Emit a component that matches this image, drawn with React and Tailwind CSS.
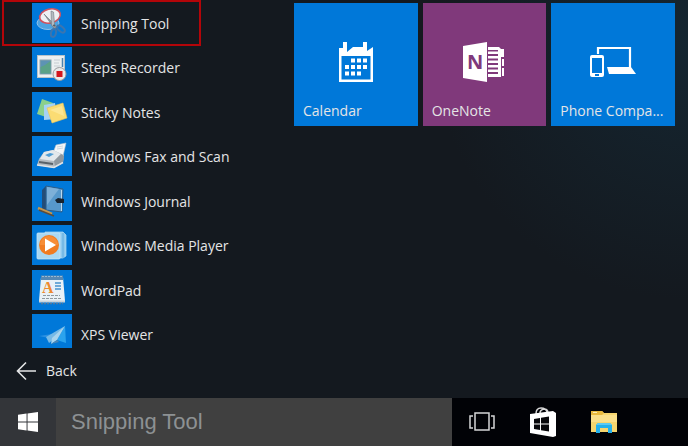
import { useState } from "react";

function SnippingIcon() {
    return (
        <svg viewBox="0 0 40 40" className="h-10 w-10" aria-hidden="true">
            <ellipse cx="16" cy="20" rx="11" ry="6.500" fill="#4da3e0" stroke="#8fc2ea" />
            <ellipse cx="18" cy="13" rx="10.500" ry="7" fill="#eef0f3" stroke="#d0525f" strokeWidth="1.600" transform="rotate(-14 18 13)" />
            <path d="M12 11 L26 25 L22 25 Z" fill="#8d969e" stroke="#6f7780" strokeWidth="0.600" />
            <path d="M19 8 L21.500 9 L23 26 L19.500 22 Z" fill="#b5bbc1" stroke="#6f7780" strokeWidth="0.600" />
            <ellipse cx="21.500" cy="30" rx="2.500" ry="4" fill="none" stroke="#3a75b0" strokeWidth="2" transform="rotate(14 21.500 30)" />
            <ellipse cx="29" cy="26" rx="2.500" ry="4.500" fill="none" stroke="#3a75b0" strokeWidth="2" transform="rotate(-48 29 26)" />
            <circle cx="22" cy="22.500" r="1" fill="#4e5963" />
        </svg>
    );
}

function StepsIcon() {
    return (
        <svg viewBox="0 0 40 40" className="h-10 w-10" aria-hidden="true">
            <rect x="5.500" y="8.500" width="27" height="22" fill="#eceff0" stroke="#b9c3c9" />
            <rect x="8" y="13" width="11" height="14" fill="#5d93b4" stroke="#8ba3ad" />
            <path d="M8.500 20 L13 18 L18.500 14 V26.500 H8.500 Z" fill="#5ba287" />
            <path d="M22 13 H28 M22 16 H27 M22 19 H28" stroke="#c5ccd1" />
            <path d="M30.500 11 V20" stroke="#4f83ad" strokeWidth="1.500" />
            <circle cx="27.500" cy="27" r="6.500" fill="#e9e9e9" stroke="#9b9da0" />
            <rect x="24.500" y="24" width="6" height="6" fill="#d3161d" />
        </svg>
    );
}

function StickyIcon() {
    return (
        <svg viewBox="0 0 40 40" className="h-10 w-10" aria-hidden="true">
            <path d="M10 7 L21 11 L17 26 L5 22 Z" fill="#8bd08c" />
            <path d="M12 13 L23 11 L25 27 L12 28 Z" fill="#a5d2f5" />
            <path d="M15 16 L31 11 L35 26 L20 31 Z" fill="#fbdc73" stroke="#e6c55d" strokeWidth="0.6" />
            <path d="M18 18 L30 14 L32 24 Z" fill="#fde693" />
        </svg>
    );
}

function FaxIcon() {
    return (
        <svg viewBox="0 0 40 40" className="h-10 w-10" aria-hidden="true">
            <path d="M24 9 L34 7 L31 20 L21 17 Z" fill="#f3f6f8" stroke="#b8c5cf" strokeWidth="0.6" />
            <path d="M25 11 L31 10 M25 13 L31 12" stroke="#c2ccd4" strokeWidth="0.8" />
            <path d="M12 16 L21 14 L32 19 L31 27 L22 32 L5 29 L7 23 Z" fill="#b4bbc1" />
            <path d="M12 16 L21 14 L29 18 L22 25 L8 23 Z" fill="#e3e8ec" />
            <path d="M13 19 L18 17 L22 18 L17 21 Z" fill="#4f9dd5" />
            <path d="M22 25 L29 18 L32 20 L31 26 L23 30 Z" fill="#8f989f" />
            <path d="M7 26 L21 28" stroke="#59626a" strokeWidth="2" fill="none" />
            <path d="M5 29 L22 31.500 L31 26.500" stroke="#dfe3e6" strokeWidth="1.500" fill="none" />
        </svg>
    );
}

function JournalIcon() {
    return (
        <svg viewBox="0 0 40 40" className="h-10 w-10" aria-hidden="true">
            <path d="M10 9 L14 5 V29 L10 31 Z" fill="#234d78" />
            <path d="M14 5 L31 8 L30 31 L14 29 Z" fill="#5798cb" stroke="#2c5c88" />
            <path d="M15 6 L27 8 L15 24 Z" fill="#7eb0d8" />
            <path d="M29.500 9 V30" stroke="#b7d8ee" />
            <path d="M23 19 L26 17 L32 18 V22 L25 22 Z" fill="#18232f" />
            <path d="M6 27 L20 33" stroke="#c6964c" strokeWidth="2.500" />
            <path d="M7 29 L22 35" stroke="#5b4d3d" strokeWidth="1.500" />
        </svg>
    );
}

function MediaIcon() {
    return (
        <svg viewBox="0 0 40 40" className="h-10 w-10" aria-hidden="true">
            <path d="M13 7 H31 L34 10 V31 L31 33 H13 Z" fill="#8ec9ee" stroke="#b3dcf4" strokeWidth="0.7" />
            <path d="M31 8 V33" stroke="#5faade" />
            <rect x="5" y="8" width="23" height="26" rx="1" fill="#a9d8f3" stroke="#c5e6f8" strokeWidth="0.8" />
            <circle cx="17" cy="20" r="10" fill="#f07c22" />
            <path d="M8 20 A9 9 0 0 1 26 20 Z" fill="#f78d36" />
            <path d="M13 13.500 L24 20 L13 26.500 Z" fill="#fff" />
        </svg>
    );
}

function WordPadIcon() {
    return (
        <svg viewBox="0 0 40 40" className="h-10 w-10" aria-hidden="true">
            <path d="M9 7 H31 L33 31 H7 Z" fill="#e9f1f7" />
            <path d="M9 5.500 H31 V10 H9 Z" fill="#5688b4" />
            <path d="M10 6.500 H31" stroke="#9eb9ce" strokeDasharray="2 1" />
            <text x="10" y="23" fontFamily="Liberation Serif, serif" fontSize="16" fontWeight="bold" fill="#ee8b2f">A</text>
            <path d="M23 13 H29 M23 16 H29 M23 19 H29" stroke="#70aad8" strokeWidth="2" />
            <path d="M11 25.500 H28 M10 28.500 H29" stroke="#8f999f" strokeDasharray="3 1" />
            <path d="M7 31.500 H33" stroke="#c9d3da" strokeWidth="2" />
            <path d="M9 33.500 H31" stroke="#55789a" strokeWidth="1.500" strokeDasharray="2 1" />
        </svg>
    );
}

function XpsIcon() {
    return (
        <svg viewBox="0 0 40 34" className="h-[34px] w-10" aria-hidden="true">
            <path d="M7 22 L20 20 L17 24 Z" fill="#2b90e2" />
            <path d="M14 23 L33 12 L22 25 L17 29 Z" fill="#76b9e6" />
            <path d="M33 12 L34 29 L25 26 Z" fill="#2ba3ee" />
            <path d="M33 12 L25 26 L19 30 L20 24 Z" fill="#a9d4ee" />
            <path d="M19 30 L25 26 L27 28 Z" fill="#4d86b5" />
        </svg>
    );
}

function CalendarIcon() {
    return (
        <svg viewBox="0 0 34 40" className="h-10 w-[34px]" fill="#fff" aria-hidden="true">
            <path d="M0 6 H4 V0 H8 V10 L14 5 H24 V0 H28 V9 L34 5 V40 H0 Z M2.500 14 V37.500 H31.500 V14 Z" fillRule="evenodd" />
            <path d="M12 16.500h4v4h-4z M18 16.500h4v4h-4z M24 16.500h4v4h-4z M6 23h4v4h-4z M12 23h4v4h-4z M18 23h4v4h-4z M24 23h4v4h-4z M6 29.500h4v4h-4z M12 29.500h4v4h-4z M18 29.500h4v4h-4z" />
        </svg>
    );
}

function OneNoteIcon() {
    return (
        <svg viewBox="0 0 42 40" className="h-10 w-[42px]" aria-hidden="true">
            <path d="M0 4 L24 0 V40 L0 36 Z" fill="#fff" />
            <text x="4" y="27" fontFamily="Open Sans, sans-serif" fontSize="20" fontWeight="bold" fill="#80397b">N</text>
            <path d="M25 5 H36 L38 7 V35 H25 V32 H35 V30 H25 V27.500 H35 V25.500 H25 V23 H35 V21 H25 V18.500 H35 V16.500 H25 V14 H35 V12 H25 V9.500 H35 V8 H25 Z" fill="#fff" />
            <path d="M38 7 H41 V15 H38 Z M39 17 H41 V24 H39 Z M39 26 H41 V34 H39 Z" fill="#fff" />
        </svg>
    );
}

function PhoneIcon() {
    return (
        <svg viewBox="0 0 48 32" className="h-8 w-12" aria-hidden="true">
            <path d="M9 8 V2 H41 V21" fill="none" stroke="#fff" strokeWidth="2.200" />
            <path d="M18 21 H42 L47 28 H20 Z" fill="#fff" />
            <path d="M3 9 H13 Q15 9 15 11 V29 Q15 31 13 31 H3 Q1 31 1 29 V11 Q1 9 3 9 Z M3 12 V27 H13 V12 Z M6 28 V30 H10 V28 Z" fillRule="evenodd" fill="#fff" />
        </svg>
    );
}

const apps = [
    { name: "Snipping Tool", Icon: SnippingIcon, marked: true },
    { name: "Steps Recorder", Icon: StepsIcon },
    { name: "Sticky Notes", Icon: StickyIcon },
    { name: "Windows Fax and Scan", Icon: FaxIcon },
    { name: "Windows Journal", Icon: JournalIcon },
    { name: "Windows Media Player", Icon: MediaIcon },
    { name: "WordPad", Icon: WordPadIcon },
    { name: "XPS Viewer", Icon: XpsIcon },
];

const tiles = [
    { name: "Calendar", Icon: CalendarIcon, color: "bg-[#0078d9]" },
    { name: "OneNote", Icon: OneNoteIcon, color: "bg-[#80397b]" },
    { name: "Phone Compa...", Icon: PhoneIcon, color: "bg-[#0078d9]" },
];

function AppRow({ name, Icon, marked }) {
    return (
        <li className="relative h-10">
            <button type="button" className="flex h-10 w-full items-start pl-8 text-left">
                <span className="bg-[#0078d9]">
                    <Icon />
                </span>
                <span className="pt-px pl-[9px] leading-10">{name}</span>
            </button>
            {marked && (
                <span className="pointer-events-none absolute -inset-y-[3px] left-0.5 w-[199px] border-2 border-[#b30509]"></span>
            )}
        </li>
    );
}

function Tile({ name, Icon, color }) {
    return (
        <button type="button" className={`${color} flex h-[123px] flex-col text-left`}>
            <span className="flex w-full flex-1 items-end justify-center pb-1">
                <span className="flex h-10 items-center">
                    <Icon />
                </span>
            </span>
            <span className="w-full truncate px-[9px] pt-[13px] pb-[3px] leading-6">{name}</span>
        </button>
    );
}

function Taskbar() {
    const [query, setQuery] = useState("Snipping Tool");

    return (
        <footer className="flex h-12 bg-[#010206]">
            <button type="button" aria-label="Start" className="flex w-14 items-center justify-center bg-[#333539]">
                <svg viewBox="0 0 21 21" className="h-5 w-5" fill="#fff" aria-hidden="true">
                    <path d="M0 3 L9 1.700 V10 H0 Z M10 1.500 L21 0 V10 H10 Z M0 11 H9 V19.300 L0 18 Z M10 11 H21 V21 L10 19.500 Z" />
                </svg>
            </button>
            <input
                type="text"
                aria-label="Search"
                value={query}
                onChange={(e) => setQuery(e.target.value)}
                className="min-w-0 flex-1 bg-[#404040] px-[15px] font-['Liberation_Sans',sans-serif] text-[22px] text-[#8d9193] outline-none"
            />
            <div className="flex w-[236px] items-center gap-[33px] pl-4">
                <button type="button" aria-label="Task View">
                    <svg viewBox="0 0 28 20" className="h-5 w-7" fill="none" stroke="#d5d6d7" strokeWidth="1.500" aria-hidden="true">
                        <path d="M7 1 H21 V18 H7 Z M5 4 H2 V16 H5 M23 4 H26 V16 H23" />
                    </svg>
                </button>
                <button type="button" aria-label="Store">
                    <svg viewBox="0 0 28 32" className="h-8 w-7" aria-hidden="true">
                        <path d="M7 8 Q7 2 12 2 Q17 2 18 6 M11 7 Q11 4 15 3 Q19 3 19 7" fill="none" stroke="#d8d8d8" strokeWidth="1.500" />
                        <path d="M1 8 L24 5 L27 7 V30 L24 31 L1 27 Z" fill="#fff" />
                        <path d="M5 13 L11 12 V17.500 H5 Z M12 11.800 L20 10.500 V17.500 H12 Z M5 18.500 H11 V24 L5 23 Z M12 18.500 H20 V25.500 L12 24.300 Z" fill="#08080b" />
                    </svg>
                </button>
                <button type="button" aria-label="File Explorer">
                    <svg viewBox="0 0 28 24" className="h-6 w-7" aria-hidden="true">
                        <path d="M1 1 H12 L14 3 H27 V22 H1 Z" fill="#f6d66f" />
                        <path d="M1 1 H12 L14 3 L12 5 H1 Z" fill="#e9b93d" />
                        <path d="M3 2.500 H7" stroke="#fff2b5" />
                        <path d="M1 5 H27 V12 H1 Z" fill="#fbe08a" />
                        <path d="M6 23 V15 L8 13 H20 L22 15 V23 H18 V18 H10 V23 Z" fill="#25b1ec" />
                        <path d="M8 13 H20 L22 15 H6 Z" fill="#5bcaf4" />
                    </svg>
                </button>
            </div>
        </footer>
    );
}

export default function App() {
    return (
        <div className="flex min-h-screen flex-col bg-[#14181d] bg-[radial-gradient(circle_at_100%_10%,#152631,#14191f_32%)] font-['Open_Sans',sans-serif] text-sm text-[#e4e5e6]">
            <main className="flex flex-1">
                <nav className="flex w-[294px] shrink-0 flex-col pt-[3px] pb-2.5">
                    <ul className="flex flex-1 flex-col justify-between">
                        {apps.map((app) => (
                            <AppRow key={app.name} {...app} />
                        ))}
                    </ul>
                    <button type="button" className="flex h-[34px] items-center gap-2.5 pl-4">
                        <svg viewBox="0 0 20 20" className="h-5 w-5" fill="none" stroke="#e4e5e6" strokeWidth="1.600" aria-hidden="true">
                            <path d="M20 10 H1.500 M10 1.500 L1.500 10 L10 18.500" />
                        </svg>
                        Back
                    </button>
                </nav>
                <section className="grid flex-1 grid-cols-3 content-start gap-[5px] pt-[3px] pr-[13px]">
                    {tiles.map((tile) => (
                        <Tile key={tile.name} {...tile} />
                    ))}
                </section>
            </main>
            <Taskbar />
        </div>
    );
}
